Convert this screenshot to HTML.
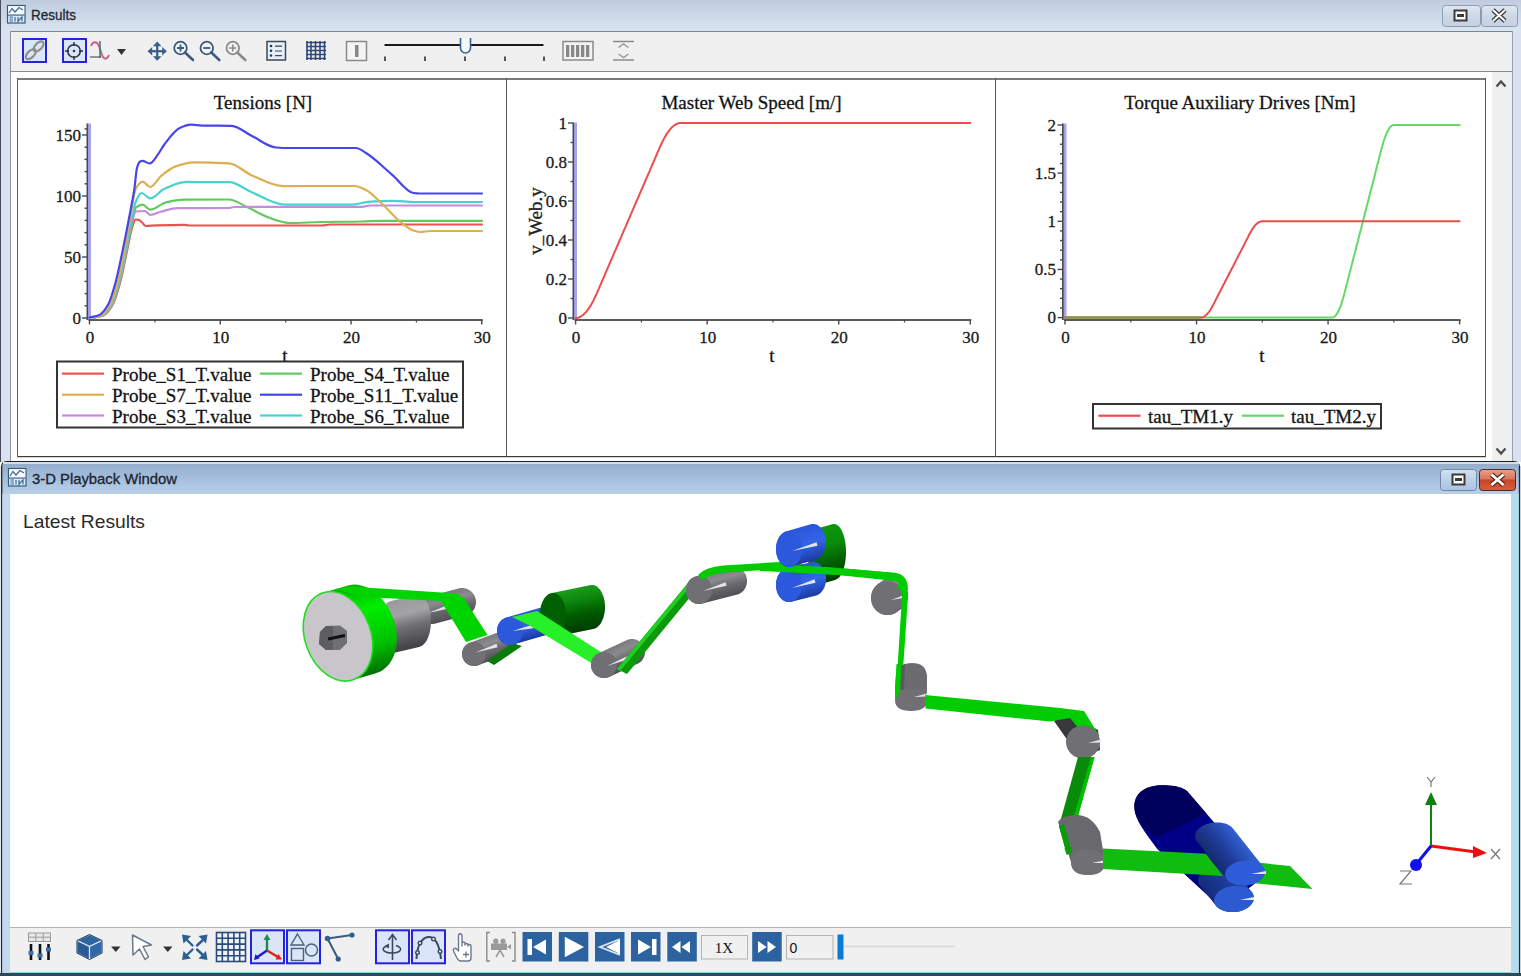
<!DOCTYPE html>
<html><head><meta charset="utf-8"><style>
html,body{margin:0;padding:0;width:1521px;height:976px;overflow:hidden;background:#fff}
svg{display:block}
text{font-family:"Liberation Serif",serif}
.ct{stroke:#1a1a1a;stroke-width:0.3px}
.sans{font-family:"Liberation Sans",sans-serif}
</style></head><body>
<svg width="1521" height="976" viewBox="0 0 1521 976">
<defs>
  <linearGradient id="gTitle1" x1="0" y1="0" x2="0" y2="1">
    <stop offset="0" stop-color="#bfccdd"/><stop offset="1" stop-color="#d8e4f0"/>
  </linearGradient>
  <linearGradient id="gTitle2" x1="0" y1="0" x2="0" y2="1">
    <stop offset="0" stop-color="#94aecc"/><stop offset="0.85" stop-color="#b2cbe9"/><stop offset="1" stop-color="#bccee2"/>
  </linearGradient>
  <linearGradient id="gBtn" x1="0" y1="0" x2="0" y2="1">
    <stop offset="0" stop-color="#dfe7f1"/><stop offset="0.5" stop-color="#cdd8e6"/><stop offset="1" stop-color="#c4d1e2"/>
  </linearGradient>
  <linearGradient id="gBtn2" x1="0" y1="0" x2="0" y2="1">
    <stop offset="0" stop-color="#d4e2f2"/><stop offset="0.5" stop-color="#bcd0e8"/><stop offset="1" stop-color="#a9c4e4"/>
  </linearGradient>
  <linearGradient id="gClose" x1="0" y1="0" x2="0" y2="1">
    <stop offset="0" stop-color="#e8a08a"/><stop offset="0.45" stop-color="#d9775a"/><stop offset="0.5" stop-color="#c8452a"/><stop offset="1" stop-color="#d2603e"/>
  </linearGradient>
</defs>

<!-- ============ RESULTS WINDOW ============ -->
<rect x="0" y="0" width="1521" height="462" fill="#dae2ef"/>
<rect x="0" y="0" width="1521" height="31" fill="url(#gTitle1)"/>
<rect x="0" y="0" width="1" height="462" fill="#464c58"/>
<!-- title icon -->
<g transform="translate(7,5)">
  <rect x="0.5" y="0.5" width="17.5" height="17.5" fill="#dcecf8" stroke="#3a5a7a" stroke-width="1.2"/>
  <rect x="1.2" y="1.2" width="16" height="8" fill="#f4faff"/>
  <polyline points="2,8 5,3.5 8,7 12,2.5 16,5" fill="none" stroke="#4a6a8a" stroke-width="1.3"/>
  <rect x="1" y="9.5" width="16.5" height="1.2" fill="#4a6a8a"/>
  <path d="M2.5,12 H6 M2.5,14 H6 M2.5,16 H6 M8,12 V16.5 M11,12 V16.5 L13,14 L15,12 V16.5" fill="none" stroke="#3a6a9a" stroke-width="1.2"/>
</g>
<text x="31" y="19.5" class="sans" font-size="14" fill="#1e2a36" stroke="#1e2a36" stroke-width="0.3" style="font-family:'Liberation Sans'" textLength="45" lengthAdjust="spacingAndGlyphs">Results</text>
<!-- title buttons -->
<rect x="1442.5" y="5.5" width="38" height="21" rx="3" fill="url(#gBtn)" stroke="#8d9db1"/>
<rect x="1481.5" y="5.5" width="36" height="21" rx="3" fill="url(#gBtn)" stroke="#8d9db1"/>
<rect x="1454.5" y="10.5" width="12" height="10" fill="#fff" stroke="#3a3a3a" stroke-width="2"/>
<rect x="1457" y="14" width="7" height="3" fill="#3a3a3a"/>
<path d="M1493,10 L1505,21 M1505,10 L1493,21" stroke="#3a3a3a" stroke-width="4.5"/>
<path d="M1493,10 L1505,21 M1505,10 L1493,21" stroke="#fff" stroke-width="2"/>

<!-- toolbar -->
<rect x="10" y="31" width="1503" height="41" fill="#f0f0f0"/>
<rect x="10" y="31" width="1503" height="1" fill="#7b858f"/>
<rect x="10" y="71" width="1503" height="1" fill="#8c8c8c"/>
<rect x="10" y="31" width="1" height="431" fill="#8a929e"/>

<!-- plot area -->
<rect x="11" y="72" width="1481" height="390" fill="#fff"/>
<rect x="1492" y="72" width="20" height="390" fill="#f0f0f0"/>
<rect x="1512" y="31" width="1" height="431" fill="#9aa0aa"/>
<path d="M1496.5,86.5 L1501,81.5 L1505.5,86.5" fill="none" stroke="#505050" stroke-width="2.4"/>
<path d="M1496.5,448.5 L1501,453.5 L1505.5,448.5" fill="none" stroke="#505050" stroke-width="2.4"/>

<!-- plot cell borders -->
<rect x="17" y="78" width="1469" height="2" fill="#7a7a7a"/>
<rect x="17" y="456" width="1469" height="1.2" fill="#3a3a3a"/>
<rect x="17" y="78" width="1" height="379" fill="#666"/>
<rect x="506" y="78" width="1" height="379" fill="#555"/>
<rect x="995" y="78" width="1" height="379" fill="#555"/>
<rect x="1485" y="78" width="1" height="379" fill="#555"/>

<!--TOOLBAR_ICONS-->
<!-- link toggle -->
<rect x="23" y="39" width="23" height="23" fill="#dae6f7" stroke="#2424e0" stroke-width="2"/>
<g fill="none" stroke="#8a9088" stroke-width="2.2">
  <ellipse cx="30.8" cy="54.2" rx="6.2" ry="3.3" transform="rotate(-45 30.8 54.2)"/>
  <ellipse cx="38.6" cy="46.4" rx="6.2" ry="3.3" transform="rotate(-45 38.6 46.4)"/>
</g>
<!-- target toggle -->
<rect x="63" y="39" width="23" height="23" fill="#dae6f7" stroke="#2424e0" stroke-width="2"/>
<circle cx="74" cy="51" r="6.3" fill="none" stroke="#2a3440" stroke-width="1.6"/>
<circle cx="74" cy="51" r="1.3" fill="#2a3440"/>
<path d="M74,42 V46 M74,56 V60 M65,51 H69 M79,51 H83" stroke="#2a3440" stroke-width="1.5"/>
<!-- curve icon -->
<path d="M91,46 C93,41 97,41 99,46 L102,55 C104,60 107,60 109,55" fill="none" stroke="#d06080" stroke-width="2"/>
<path d="M100,41 V58" stroke="#3a7a80" stroke-width="1.5"/>
<path d="M90,57 H101" stroke="#4a5a60" stroke-width="1.2"/>
<path d="M117,49 L126,49 L121.5,55 Z" fill="#333"/>
<!-- move -->
<g fill="#3b5f8c">
  <rect x="156.1" y="45" width="2.2" height="12"/>
  <rect x="151" y="50.1" width="12" height="2.2"/>
  <path d="M157.2,41.5 L161.5,46.2 L152.9,46.2 Z"/>
  <path d="M157.2,60.8 L161.5,56.2 L152.9,56.2 Z"/>
  <path d="M147.5,51.2 L152.2,46.9 L152.2,55.5 Z"/>
  <path d="M166.9,51.2 L162.2,46.9 L162.2,55.5 Z"/>
</g>
<!-- zoom in -->
<g fill="none" stroke="#3f5a78">
  <circle cx="180.5" cy="48" r="6.3" stroke-width="1.8" fill="#eef4fb"/>
  <path d="M185,52.5 L193,60" stroke-width="2.6" stroke-linecap="round"/>
  <path d="M177,48 H184 M180.5,44.5 V51.5" stroke-width="1.8"/>
</g>
<!-- zoom out -->
<g fill="none" stroke="#3f5a78">
  <circle cx="206.8" cy="48" r="6.3" stroke-width="1.8" fill="#eef4fb"/>
  <path d="M211.3,52.5 L219.3,60" stroke-width="2.6" stroke-linecap="round"/>
  <path d="M203.3,48 H210.3" stroke-width="1.8"/>
</g>
<!-- zoom gray -->
<g fill="none" stroke="#8a8a8a">
  <circle cx="232.8" cy="48" r="6.3" stroke-width="1.8"/>
  <path d="M237.3,52.5 L245.3,60" stroke-width="2.6" stroke-linecap="round"/>
  <path d="M229.3,48 H236.3 M232.8,44.5 V51.5" stroke-width="1.6"/>
</g>
<!-- list -->
<rect x="267" y="41.5" width="18.5" height="18.5" fill="#e6f0fa" stroke="#3a4858" stroke-width="1.5"/>
<g fill="#2a3848"><circle cx="271" cy="46" r="1.3"/><circle cx="271" cy="50.8" r="1.3"/><circle cx="271" cy="55.5" r="1.3"/></g>
<path d="M275,46.2 H282 M275,51 H282 M275,55.7 H282" stroke="#3a4858" stroke-width="1.2"/>
<!-- grid -->
<g stroke="#2e4a7a" stroke-width="1.6">
  <path d="M307,41 V60 M311,41 V60 M315.5,41 V60 M320,41 V60 M324.5,41 V60"/>
  <path d="M306,42.5 H326 M306,46.5 H326 M306,50.5 H326 M306,54.5 H326 M306,58.5 H326"/>
</g>
<!-- I box -->
<rect x="346.5" y="41.5" width="20" height="19" fill="#f4f4f4" stroke="#8a8a8a" stroke-width="1.5"/>
<rect x="355" y="45" width="3.5" height="12" fill="#888"/>
<!-- slider -->
<rect x="384.5" y="44" width="159" height="2" fill="#1a1a1a"/>
<g stroke="#111" stroke-width="1.4">
  <path d="M385,56.5 V61 M425,56.5 V61 M465,56.5 V61 M505,56.5 V61 M544,56.5 V61"/>
</g>
<path d="M460.5,38 V48 A5,5 0 0 0 470.5,48 V38" fill="#f4f8fc" stroke="#3a6090" stroke-width="1.6"/>
<!-- film strip -->
<rect x="563" y="41.5" width="30" height="18.5" fill="#f4f4f4" stroke="#8a8a8a" stroke-width="1.5"/>
<g fill="#888"><rect x="566" y="45" width="3.3" height="12"/><rect x="571" y="45" width="3.3" height="12"/><rect x="576" y="45" width="3.3" height="12"/><rect x="581" y="45" width="3.3" height="12"/><rect x="586" y="45" width="3.3" height="12"/></g>
<!-- collapse -->
<path d="M613,41.5 H634 M613,60 H634" stroke="#8a8a8a" stroke-width="1.5"/>
<path d="M618.5,47.5 L623.5,44 L628.5,47.5 M618.5,54 L623.5,57.5 L628.5,54" fill="none" stroke="#9a9a9a" stroke-width="1.5"/>

<!--/TOOLBAR_ICONS-->

<!--CHARTS-->
<text class="ct" x="285" y="362" font-size="19" text-anchor="middle" fill="#111">t</text>
<text class="ct" x="263" y="108.5" font-size="19" text-anchor="middle" fill="#111">Tensions [N]</text>
<rect x="87.5" y="123.5" width="3.5" height="196.5" fill="#a4a4ee"/>
<rect x="86.5" y="123.5" width="1.6" height="196.5" fill="#4a4a4a"/>
<rect x="82" y="317.3" width="5" height="1.4" fill="#4a4a4a"/>
<text class="ct" x="81" y="323.5" font-size="17" text-anchor="end" fill="#1a1a1a">0</text>
<rect x="82" y="256.3" width="5" height="1.4" fill="#4a4a4a"/>
<text class="ct" x="81" y="262.5" font-size="17" text-anchor="end" fill="#1a1a1a">50</text>
<rect x="82" y="195.3" width="5" height="1.4" fill="#4a4a4a"/>
<text class="ct" x="81" y="201.5" font-size="17" text-anchor="end" fill="#1a1a1a">100</text>
<rect x="82" y="134.3" width="5" height="1.4" fill="#4a4a4a"/>
<text class="ct" x="81" y="140.5" font-size="17" text-anchor="end" fill="#1a1a1a">150</text>
<rect x="84.5" y="305.1" width="2.5" height="1.4" fill="#4a4a4a"/>
<rect x="84.5" y="292.90000000000003" width="2.5" height="1.4" fill="#4a4a4a"/>
<rect x="84.5" y="280.7" width="2.5" height="1.4" fill="#4a4a4a"/>
<rect x="84.5" y="268.5" width="2.5" height="1.4" fill="#4a4a4a"/>
<rect x="84.5" y="244.10000000000002" width="2.5" height="1.4" fill="#4a4a4a"/>
<rect x="84.5" y="231.90000000000003" width="2.5" height="1.4" fill="#4a4a4a"/>
<rect x="84.5" y="219.70000000000002" width="2.5" height="1.4" fill="#4a4a4a"/>
<rect x="84.5" y="207.5" width="2.5" height="1.4" fill="#4a4a4a"/>
<rect x="84.5" y="183.10000000000002" width="2.5" height="1.4" fill="#4a4a4a"/>
<rect x="84.5" y="170.9" width="2.5" height="1.4" fill="#4a4a4a"/>
<rect x="84.5" y="158.70000000000002" width="2.5" height="1.4" fill="#4a4a4a"/>
<rect x="84.5" y="146.50000000000003" width="2.5" height="1.4" fill="#4a4a4a"/>
<rect x="84.5" y="128.20000000000002" width="2.5" height="1.4" fill="#4a4a4a"/>
<rect x="88.5" y="319" width="394.3" height="2" fill="#5a5a5a"/>
<rect x="88.8" y="320" width="1.4" height="4.5" fill="#4a4a4a"/>
<text class="ct" x="90.0" y="342.5" font-size="17" text-anchor="middle" fill="#1a1a1a">0</text>
<rect x="219.5666666666667" y="320" width="1.4" height="4.5" fill="#4a4a4a"/>
<text class="ct" x="220.76666666666668" y="342.5" font-size="17" text-anchor="middle" fill="#1a1a1a">10</text>
<rect x="350.33333333333337" y="320" width="1.4" height="4.5" fill="#4a4a4a"/>
<text class="ct" x="351.53333333333336" y="342.5" font-size="17" text-anchor="middle" fill="#1a1a1a">20</text>
<rect x="481.1" y="320" width="1.4" height="4.5" fill="#4a4a4a"/>
<text class="ct" x="482.3" y="342.5" font-size="17" text-anchor="middle" fill="#1a1a1a">30</text>
<rect x="154.28333333333333" y="320" width="1.2" height="2.5" fill="#4a4a4a"/>
<rect x="285.04999999999995" y="320" width="1.2" height="2.5" fill="#4a4a4a"/>
<rect x="415.81666666666666" y="320" width="1.2" height="2.5" fill="#4a4a4a"/>
<path d="M94.0,317.5 C97.2,316.8 100.3,316.6 103.5,315.5 C106.5,314.4 109.5,310.1 112.5,305.0 C115.0,300.8 117.5,292.0 120.0,283.0 C122.3,274.6 124.7,261.7 127.0,251.0 C128.7,243.4 130.3,233.2 132.0,228.0 C133.2,224.4 134.3,219.5 135.5,219.5 C136.5,219.5 137.5,219.6 138.5,219.8 C139.5,220.0 140.5,221.2 141.5,222.0 C143.0,223.2 144.5,226.0 146.0,226.0 C149.7,226.0 153.3,225.4 157.0,225.3 C166.0,225.0 175.0,224.8 184.0,224.8 C185.7,224.8 187.3,225.5 189.0,225.5 C233.3,225.5 277.7,225.5 322.0,225.5 C324.7,225.5 327.3,224.5 330.0,224.5 C380.7,224.5 431.3,224.5 482.0,224.5" fill="none" stroke="#ee5050" stroke-width="2.2" stroke-linejoin="round" stroke-linecap="round" opacity="1.0"/>
<path d="M93.5,317.5 C96.7,316.8 99.8,316.6 103.0,315.5 C106.0,314.4 109.0,310.1 112.0,305.0 C114.5,300.8 117.0,292.0 119.5,283.0 C121.8,274.6 124.2,262.1 126.5,251.0 C128.3,242.3 130.2,232.2 132.0,224.0 C133.3,218.0 134.7,208.6 136.0,207.5 C138.2,205.7 140.3,204.7 142.5,204.7 C145.1,204.7 147.8,209.7 150.4,209.7 C155.6,209.7 160.8,203.6 166.0,202.4 C172.0,201.0 178.0,199.8 184.0,199.7 C199.0,199.6 214.0,199.5 229.0,199.5 C235.0,199.5 241.0,204.3 247.0,207.0 C253.0,209.7 259.0,213.6 265.0,216.0 C271.0,218.4 277.0,220.9 283.0,222.0 C285.3,222.4 287.7,223.0 290.0,223.0 C300.0,223.0 310.0,222.2 320.0,222.0 C334.0,221.7 348.0,221.8 362.0,221.5 C368.0,221.4 374.0,220.8 380.0,220.8 C414.0,220.8 448.0,220.8 482.0,220.8" fill="none" stroke="#62c862" stroke-width="2.2" stroke-linejoin="round" stroke-linecap="round" opacity="1.0"/>
<path d="M93.0,317.5 C96.2,316.8 99.3,316.6 102.5,315.5 C105.5,314.4 108.5,310.1 111.5,305.0 C114.0,300.8 116.5,292.0 119.0,283.0 C121.3,274.6 123.7,262.5 126.0,251.0 C127.8,242.0 129.7,227.9 131.5,222.0 C133.0,217.2 134.5,211.7 136.0,211.5 C138.9,211.1 141.9,211.0 144.8,211.0 C146.7,211.0 148.5,214.8 150.4,214.8 C154.2,214.8 157.9,212.4 161.7,211.5 C166.9,210.2 172.2,208.2 177.4,208.2 C194.6,208.0 211.8,208.2 229.0,208.0 C230.7,208.0 232.3,207.0 234.0,207.0 C276.7,206.8 319.3,207.0 362.0,206.8 C364.7,206.8 367.3,205.5 370.0,205.5 C407.3,205.5 444.7,205.5 482.0,205.5" fill="none" stroke="#c88ae0" stroke-width="2.2" stroke-linejoin="round" stroke-linecap="round" opacity="1.0"/>
<path d="M92.5,317.5 C95.7,316.8 98.8,316.6 102.0,315.5 C105.0,314.4 108.0,310.1 111.0,305.0 C113.5,300.8 116.0,292.0 118.5,283.0 C120.8,274.6 123.2,262.8 125.5,251.0 C127.3,241.7 129.2,228.1 131.0,220.0 C132.8,212.0 134.6,203.9 136.4,200.2 C138.1,196.8 139.7,193.0 141.4,193.0 C144.4,193.0 147.4,198.4 150.4,198.4 C154.9,198.4 159.5,191.0 164.0,189.0 C171.5,185.6 179.0,181.9 186.5,181.9 C192.5,181.9 198.5,182.2 204.5,182.2 C212.8,182.2 221.0,182.2 229.3,182.2 C236.8,182.2 244.4,189.2 251.9,192.3 C262.4,196.7 272.9,204.0 283.4,204.5 C285.6,204.6 287.8,204.7 290.0,204.7 C310.7,204.7 331.3,204.7 352.0,204.7 C357.3,204.7 362.7,202.1 368.0,201.8 C376.3,201.3 384.7,200.9 393.0,200.9 C400.0,200.9 407.0,202.0 414.0,202.0 C436.7,202.0 459.3,202.0 482.0,202.0" fill="none" stroke="#48d2d2" stroke-width="2.2" stroke-linejoin="round" stroke-linecap="round" opacity="1.0"/>
<path d="M91.5,317.5 C94.7,316.8 97.8,316.6 101.0,315.5 C104.0,314.4 107.0,310.1 110.0,305.0 C112.5,300.8 115.0,292.0 117.5,283.0 C119.8,274.6 122.2,263.2 124.5,251.0 C126.3,241.4 128.2,228.1 130.0,218.0 C131.9,207.5 133.8,192.4 135.7,189.0 C138.0,184.9 140.2,181.7 142.5,181.7 C145.1,181.7 147.8,187.0 150.4,187.0 C154.2,187.0 157.9,178.4 161.7,175.4 C166.2,171.8 170.7,168.2 175.2,166.6 C181.2,164.5 187.2,162.3 193.2,162.3 C205.2,162.3 217.3,162.7 229.3,163.4 C236.8,163.9 244.4,172.2 251.9,175.4 C262.4,179.8 272.9,186.2 283.4,186.2 C288.9,186.2 294.5,186.0 300.0,186.0 C318.2,186.0 336.4,186.0 354.6,186.0 C358.4,186.0 362.2,188.2 366.0,190.0 C371.7,192.8 377.3,199.5 383.0,204.7 C389.3,210.5 395.7,218.5 402.0,223.3 C405.8,226.2 409.6,229.4 413.4,230.5 C415.8,231.2 418.2,232.0 420.6,232.0 C423.7,232.0 426.9,231.0 430.0,231.0 C447.3,231.0 464.7,231.0 482.0,231.0" fill="none" stroke="#dcb050" stroke-width="2.2" stroke-linejoin="round" stroke-linecap="round" opacity="1.0"/>
<path d="M89.5,317.5 C92.8,316.7 96.0,316.4 99.3,315.0 C102.3,313.7 105.3,309.5 108.3,304.3 C110.7,300.1 113.1,291.3 115.5,282.7 C117.9,274.1 120.3,261.9 122.7,250.4 C124.8,240.4 126.9,229.3 129.0,218.2 C130.8,208.9 132.5,201.1 134.3,189.5 C135.2,183.6 136.1,171.2 137.0,168.0 C137.9,164.8 138.8,162.2 139.7,161.7 C140.6,161.2 141.5,160.8 142.4,160.8 C144.8,160.8 147.2,163.5 149.6,163.5 C152.6,163.5 155.5,157.5 158.5,153.6 C160.3,151.2 162.2,147.4 164.0,145.0 C169.2,138.1 174.5,130.3 179.7,128.0 C183.5,126.3 187.2,124.7 191.0,124.7 C194.7,124.7 198.3,125.5 202.0,125.6 C211.9,125.7 221.7,125.7 231.6,125.8 C238.4,125.9 245.1,132.7 251.9,136.0 C259.9,139.9 268.0,147.0 276.0,147.5 C280.7,147.8 285.3,148.0 290.0,148.0 C312.0,148.0 334.0,148.0 356.0,148.0 C359.3,148.0 362.7,151.0 366.0,153.0 C374.7,158.2 383.3,167.3 392.0,174.6 C399.1,180.6 406.3,192.1 413.4,193.0 C415.6,193.3 417.8,193.5 420.0,193.5 C440.7,193.5 461.3,193.5 482.0,193.5" fill="none" stroke="#4646ea" stroke-width="2.2" stroke-linejoin="round" stroke-linecap="round" opacity="1.0"/>
<rect x="57" y="361.5" width="406" height="66" fill="#fff" stroke="#333" stroke-width="2"/>
<rect x="62" y="372.5" width="42" height="2.2" fill="#ee5050"/>
<text class="ct" x="112" y="380.6" font-size="19" fill="#111">Probe_S1_T.value</text>
<rect x="62" y="393.59999999999997" width="42" height="2.2" fill="#dcb050"/>
<text class="ct" x="112" y="401.7" font-size="19" fill="#111">Probe_S7_T.value</text>
<rect x="62" y="414.4" width="42" height="2.2" fill="#c88ae0"/>
<text class="ct" x="112" y="422.5" font-size="19" fill="#111">Probe_S3_T.value</text>
<rect x="260" y="372.5" width="42" height="2.2" fill="#62c862"/>
<text class="ct" x="310" y="380.6" font-size="19" fill="#111">Probe_S4_T.value</text>
<rect x="260" y="393.59999999999997" width="42" height="2.2" fill="#4646ea"/>
<text class="ct" x="310" y="401.7" font-size="19" fill="#111">Probe_S11_T.value</text>
<rect x="260" y="414.4" width="42" height="2.2" fill="#48d2d2"/>
<text class="ct" x="310" y="422.5" font-size="19" fill="#111">Probe_S6_T.value</text>
<text class="ct" x="751.5" y="108.5" font-size="19" text-anchor="middle" fill="#111">Master Web Speed [m/]</text>
<rect x="573.5" y="122.5" width="3.5" height="197.5" fill="#a4a4ee"/>
<rect x="572.5" y="122.5" width="1.6" height="197.5" fill="#4a4a4a"/>
<rect x="568" y="317.3" width="5" height="1.4" fill="#4a4a4a"/>
<text class="ct" x="567" y="323.5" font-size="17" text-anchor="end" fill="#1a1a1a">0</text>
<rect x="568" y="278.3" width="5" height="1.4" fill="#4a4a4a"/>
<text class="ct" x="567" y="284.5" font-size="17" text-anchor="end" fill="#1a1a1a">0.2</text>
<rect x="568" y="239.3" width="5" height="1.4" fill="#4a4a4a"/>
<text class="ct" x="567" y="245.5" font-size="17" text-anchor="end" fill="#1a1a1a">0.4</text>
<rect x="568" y="200.3" width="5" height="1.4" fill="#4a4a4a"/>
<text class="ct" x="567" y="206.5" font-size="17" text-anchor="end" fill="#1a1a1a">0.6</text>
<rect x="568" y="161.3" width="5" height="1.4" fill="#4a4a4a"/>
<text class="ct" x="567" y="167.5" font-size="17" text-anchor="end" fill="#1a1a1a">0.8</text>
<rect x="568" y="122.3" width="5" height="1.4" fill="#4a4a4a"/>
<text class="ct" x="567" y="128.5" font-size="17" text-anchor="end" fill="#1a1a1a">1</text>
<rect x="570.5" y="297.8" width="2.5" height="1.4" fill="#4a4a4a"/>
<rect x="570.5" y="258.8" width="2.5" height="1.4" fill="#4a4a4a"/>
<rect x="570.5" y="219.8" width="2.5" height="1.4" fill="#4a4a4a"/>
<rect x="570.5" y="180.8" width="2.5" height="1.4" fill="#4a4a4a"/>
<rect x="570.5" y="141.8" width="2.5" height="1.4" fill="#4a4a4a"/>
<rect x="574.6" y="319" width="396.69999999999993" height="2" fill="#5a5a5a"/>
<rect x="574.9" y="320" width="1.4" height="4.5" fill="#4a4a4a"/>
<text class="ct" x="576.1" y="342.5" font-size="17" text-anchor="middle" fill="#1a1a1a">0</text>
<rect x="706.4666666666666" y="320" width="1.4" height="4.5" fill="#4a4a4a"/>
<text class="ct" x="707.6666666666666" y="342.5" font-size="17" text-anchor="middle" fill="#1a1a1a">10</text>
<rect x="838.0333333333333" y="320" width="1.4" height="4.5" fill="#4a4a4a"/>
<text class="ct" x="839.2333333333333" y="342.5" font-size="17" text-anchor="middle" fill="#1a1a1a">20</text>
<rect x="969.5999999999999" y="320" width="1.4" height="4.5" fill="#4a4a4a"/>
<text class="ct" x="970.8" y="342.5" font-size="17" text-anchor="middle" fill="#1a1a1a">30</text>
<rect x="640.7833333333333" y="320" width="1.2" height="2.5" fill="#4a4a4a"/>
<rect x="772.35" y="320" width="1.2" height="2.5" fill="#4a4a4a"/>
<rect x="903.9166666666666" y="320" width="1.2" height="2.5" fill="#4a4a4a"/>
<text class="ct" x="772" y="362" font-size="19" text-anchor="middle" fill="#111">t</text>
<text class="ct" transform="translate(541.5,221) rotate(-90)" font-size="19" text-anchor="middle" fill="#222">v_Web.y</text>
<path d="M575.6,318.0 L576.7,317.9 L577.7,317.8 L578.8,317.5 L579.8,317.0 L580.9,316.5 L581.9,315.8 L583.0,315.0 L584.0,314.1 L585.1,313.1 L586.1,311.9 L587.2,310.6 L588.2,309.2 L589.3,307.7 L590.3,306.1 L591.4,304.3 L592.4,302.4 L593.5,300.4 L594.5,298.3 L595.6,296.0 L596.7,293.6 L597.7,291.2 L598.8,288.8 L599.8,286.3 L600.9,283.9 L601.9,281.4 L603.0,279.0 L604.0,276.6 L605.1,274.1 L606.1,271.7 L607.2,269.2 L608.2,266.8 L609.3,264.4 L610.3,261.9 L611.4,259.5 L612.4,257.1 L613.5,254.6 L614.5,252.2 L615.6,249.8 L616.6,247.3 L617.7,244.9 L618.8,242.4 L619.8,240.0 L620.9,237.6 L621.9,235.1 L623.0,232.7 L624.0,230.2 L625.1,227.8 L626.1,225.4 L627.2,222.9 L628.2,220.5 L629.3,218.1 L630.3,215.6 L631.4,213.2 L632.4,210.8 L633.5,208.3 L634.5,205.9 L635.6,203.4 L636.6,201.0 L637.7,198.6 L638.8,196.1 L639.8,193.7 L640.9,191.2 L641.9,188.8 L643.0,186.4 L644.0,183.9 L645.1,181.5 L646.1,179.1 L647.2,176.6 L648.2,174.2 L649.3,171.8 L650.3,169.3 L651.4,166.9 L652.4,164.4 L653.5,162.0 L654.5,159.6 L655.6,157.1 L656.6,154.7 L657.7,152.2 L658.8,149.8 L659.8,147.4 L660.9,145.0 L661.9,142.7 L663.0,140.6 L664.0,138.6 L665.1,136.7 L666.1,134.9 L667.2,133.3 L668.2,131.8 L669.3,130.4 L670.3,129.1 L671.4,127.9 L672.4,126.9 L673.5,126.0 L674.5,125.2 L675.6,124.5 L676.6,124.0 L677.7,123.5 L678.7,123.2 L679.8,123.1 L680.9,123.0 L970.3,123.0" fill="none" stroke="#ee4c4c" stroke-width="2.0" stroke-linejoin="round" stroke-linecap="round" opacity="1.0"/>
<text class="ct" x="1240" y="108.5" font-size="19" text-anchor="middle" fill="#111">Torque Auxiliary Drives [Nm]</text>
<rect x="1063.0" y="123.5" width="3.5" height="196.5" fill="#a4a4ee"/>
<rect x="1062.0" y="123.5" width="1.6" height="196.5" fill="#4a4a4a"/>
<rect x="1057.5" y="316.90000000000003" width="5" height="1.4" fill="#4a4a4a"/>
<text class="ct" x="1056" y="323.1" font-size="17" text-anchor="end" fill="#1a1a1a">0</text>
<rect x="1057.5" y="268.75000000000006" width="5" height="1.4" fill="#4a4a4a"/>
<text class="ct" x="1056" y="274.95000000000005" font-size="17" text-anchor="end" fill="#1a1a1a">0.5</text>
<rect x="1057.5" y="220.60000000000002" width="5" height="1.4" fill="#4a4a4a"/>
<text class="ct" x="1056" y="226.8" font-size="17" text-anchor="end" fill="#1a1a1a">1</text>
<rect x="1057.5" y="172.45000000000005" width="5" height="1.4" fill="#4a4a4a"/>
<text class="ct" x="1056" y="178.65000000000003" font-size="17" text-anchor="end" fill="#1a1a1a">1.5</text>
<rect x="1057.5" y="124.30000000000003" width="5" height="1.4" fill="#4a4a4a"/>
<text class="ct" x="1056" y="130.50000000000003" font-size="17" text-anchor="end" fill="#1a1a1a">2</text>
<rect x="1060.0" y="307.27000000000004" width="2.5" height="1.4" fill="#4a4a4a"/>
<rect x="1060.0" y="297.64000000000004" width="2.5" height="1.4" fill="#4a4a4a"/>
<rect x="1060.0" y="288.01000000000005" width="2.5" height="1.4" fill="#4a4a4a"/>
<rect x="1060.0" y="278.38000000000005" width="2.5" height="1.4" fill="#4a4a4a"/>
<rect x="1060.0" y="259.12000000000006" width="2.5" height="1.4" fill="#4a4a4a"/>
<rect x="1060.0" y="249.49000000000004" width="2.5" height="1.4" fill="#4a4a4a"/>
<rect x="1060.0" y="239.86" width="2.5" height="1.4" fill="#4a4a4a"/>
<rect x="1060.0" y="230.23000000000002" width="2.5" height="1.4" fill="#4a4a4a"/>
<rect x="1060.0" y="210.97000000000003" width="2.5" height="1.4" fill="#4a4a4a"/>
<rect x="1060.0" y="201.34000000000003" width="2.5" height="1.4" fill="#4a4a4a"/>
<rect x="1060.0" y="191.71000000000004" width="2.5" height="1.4" fill="#4a4a4a"/>
<rect x="1060.0" y="182.08000000000004" width="2.5" height="1.4" fill="#4a4a4a"/>
<rect x="1060.0" y="162.82000000000002" width="2.5" height="1.4" fill="#4a4a4a"/>
<rect x="1060.0" y="153.19000000000005" width="2.5" height="1.4" fill="#4a4a4a"/>
<rect x="1060.0" y="143.56000000000003" width="2.5" height="1.4" fill="#4a4a4a"/>
<rect x="1060.0" y="133.93000000000004" width="2.5" height="1.4" fill="#4a4a4a"/>
<rect x="1064.0" y="319" width="396.5999999999999" height="2" fill="#5a5a5a"/>
<rect x="1064.3" y="320" width="1.4" height="4.5" fill="#4a4a4a"/>
<text class="ct" x="1065.5" y="342.5" font-size="17" text-anchor="middle" fill="#1a1a1a">0</text>
<rect x="1195.8333333333333" y="320" width="1.4" height="4.5" fill="#4a4a4a"/>
<text class="ct" x="1197.0333333333333" y="342.5" font-size="17" text-anchor="middle" fill="#1a1a1a">10</text>
<rect x="1327.3666666666666" y="320" width="1.4" height="4.5" fill="#4a4a4a"/>
<text class="ct" x="1328.5666666666666" y="342.5" font-size="17" text-anchor="middle" fill="#1a1a1a">20</text>
<rect x="1458.8999999999999" y="320" width="1.4" height="4.5" fill="#4a4a4a"/>
<text class="ct" x="1460.1" y="342.5" font-size="17" text-anchor="middle" fill="#1a1a1a">30</text>
<rect x="1130.1666666666667" y="320" width="1.2" height="2.5" fill="#4a4a4a"/>
<rect x="1261.7" y="320" width="1.2" height="2.5" fill="#4a4a4a"/>
<rect x="1393.2333333333333" y="320" width="1.2" height="2.5" fill="#4a4a4a"/>
<text class="ct" x="1262" y="362" font-size="19" text-anchor="middle" fill="#111">t</text>
<path d="M1065.0,317.6 L1332.0,317.6 L1333.0,317.4 L1334.1,316.9 L1335.1,316.1 L1336.1,314.9 L1337.2,313.4 L1338.2,311.6 L1339.2,309.4 L1340.3,306.9 L1341.3,304.1 L1342.3,300.9 L1343.3,297.4 L1344.4,293.5 L1345.4,289.5 L1346.4,285.5 L1347.5,281.5 L1348.5,277.5 L1349.5,273.5 L1350.6,269.4 L1351.6,265.4 L1352.6,261.4 L1353.6,257.4 L1354.7,253.4 L1355.7,249.4 L1356.7,245.4 L1357.8,241.4 L1358.8,237.4 L1359.8,233.3 L1360.9,229.3 L1361.9,225.3 L1362.9,221.3 L1364.0,217.3 L1365.0,213.3 L1366.0,209.3 L1367.0,205.2 L1368.1,201.2 L1369.1,197.2 L1370.1,193.2 L1371.2,189.2 L1372.2,185.2 L1373.2,181.2 L1374.3,177.2 L1375.3,173.2 L1376.3,169.1 L1377.3,165.1 L1378.4,161.1 L1379.4,157.1 L1380.4,153.1 L1381.5,149.1 L1382.5,145.2 L1383.5,141.7 L1384.6,138.5 L1385.6,135.7 L1386.6,133.2 L1387.7,131.0 L1388.7,129.2 L1389.7,127.7 L1390.7,126.5 L1391.8,125.7 L1392.8,125.2 L1393.8,125.0 L1459.6,125.0" fill="none" stroke="#66d866" stroke-width="2.0" stroke-linejoin="round" stroke-linecap="round" opacity="1.0"/>
<path d="M1065.0,317.6 L1200.5,317.6 L1201.5,317.5 L1202.5,317.3 L1203.6,316.8 L1204.6,316.3 L1205.6,315.5 L1206.7,314.6 L1207.7,313.5 L1208.7,312.2 L1209.8,310.8 L1210.8,309.2 L1211.8,307.5 L1212.8,305.6 L1213.9,303.6 L1214.9,301.6 L1215.9,299.5 L1217.0,297.5 L1218.0,295.5 L1219.0,293.5 L1220.1,291.5 L1221.1,289.5 L1222.1,287.5 L1223.1,285.5 L1224.2,283.5 L1225.2,281.5 L1226.2,279.5 L1227.3,277.5 L1228.3,275.5 L1229.3,273.5 L1230.4,271.5 L1231.4,269.5 L1232.4,267.4 L1233.5,265.4 L1234.5,263.4 L1235.5,261.4 L1236.5,259.4 L1237.6,257.4 L1238.6,255.4 L1239.6,253.4 L1240.7,251.4 L1241.7,249.4 L1242.7,247.4 L1243.8,245.4 L1244.8,243.4 L1245.8,241.4 L1246.8,239.4 L1247.9,237.4 L1248.9,235.3 L1249.9,233.3 L1251.0,231.4 L1252.0,229.7 L1253.0,228.1 L1254.1,226.7 L1255.1,225.4 L1256.1,224.3 L1257.1,223.4 L1258.2,222.6 L1259.2,222.1 L1260.2,221.6 L1261.3,221.4 L1262.3,221.3 L1459.6,221.3" fill="none" stroke="#ee4c4c" stroke-width="2.0" stroke-linejoin="round" stroke-linecap="round" opacity="1.0"/>
<rect x="1065.0" y="316.3" width="135.47933333333322" height="2.6" fill="#8c9a50"/>
<rect x="1093" y="404" width="288" height="24.5" fill="#fff" stroke="#333" stroke-width="2"/>
<rect x="1098.4" y="414.6" width="42" height="2.2" fill="#ee4c4c"/>
<text class="ct" x="1148" y="423" font-size="19" fill="#111">tau_TM1.y</text>
<rect x="1242" y="414.6" width="42" height="2.2" fill="#66d866"/>
<text class="ct" x="1291" y="423" font-size="19" fill="#111">tau_TM2.y</text>
<!--/CHARTS-->

<!-- ============ 3D WINDOW ============ -->
<path d="M1.6,976 L1.6,467 Q1.6,461.5 7,461.5 L1514,461.5 Q1519.4,461.5 1519.4,467 L1519.4,976 Z" fill="#c3d6ea" stroke="#222" stroke-width="1.2"/>
<rect x="3" y="462" width="1516" height="2" fill="#d8dee4"/>
<rect x="3" y="464" width="1516" height="30" fill="url(#gTitle2)"/>
<g transform="translate(8,468)">
  <rect x="0.5" y="0.5" width="17.5" height="17.5" fill="#dcecf8" stroke="#3a5a7a" stroke-width="1.2"/>
  <rect x="1.2" y="1.2" width="16" height="8" fill="#f4faff"/>
  <polyline points="2,8 5,3.5 8,7 12,2.5 16,5" fill="none" stroke="#4a6a8a" stroke-width="1.3"/>
  <rect x="1" y="9.5" width="16.5" height="1.2" fill="#4a6a8a"/>
  <path d="M2.5,12 H6 M2.5,14 H6 M2.5,16 H6 M8,12 V16.5 M11,12 V16.5 L13,14 L15,12 V16.5" fill="none" stroke="#3a6a9a" stroke-width="1.2"/>
</g>
<text x="32" y="483.5" font-size="14.5" fill="#1a2430" stroke="#1a2430" stroke-width="0.3" style="font-family:'Liberation Sans'" textLength="145" lengthAdjust="spacingAndGlyphs">3-D Playback Window</text>
<rect x="1440.5" y="469.5" width="36" height="21" rx="3" fill="url(#gBtn2)" stroke="#6f88a8"/>
<rect x="1479.5" y="469.5" width="36" height="21" rx="3" fill="url(#gClose)" stroke="#4a2a28"/>
<rect x="1452.5" y="474.5" width="12" height="10" fill="#fff" stroke="#3a3a3a" stroke-width="2"/>
<rect x="1455" y="478" width="7" height="3" fill="#3a3a3a"/>
<path d="M1491.5,474.5 L1503.5,485 M1503.5,474.5 L1491.5,485" stroke="#5a2a22" stroke-width="5"/>
<path d="M1491.5,474.5 L1503.5,485 M1503.5,474.5 L1491.5,485" stroke="#fff" stroke-width="2.6"/>

<rect x="10" y="494" width="1501" height="433" fill="#fff"/>
<text x="23" y="528" font-size="19" fill="#2a2a2a" style="font-family:'Liberation Sans'" textLength="122" lengthAdjust="spacingAndGlyphs">Latest Results</text>

<!--SCENE-->
<defs><linearGradient id="sg1" gradientUnits="userSpaceOnUse" x1="443.4" y1="592.5" x2="450.6" y2="619.5"><stop offset="0" stop-color="#7a7a7e"/><stop offset="0.3" stop-color="#8c8c90"/><stop offset="0.6" stop-color="#6a6a6e"/><stop offset="1" stop-color="#505054"/></linearGradient><linearGradient id="sg2" gradientUnits="userSpaceOnUse" x1="399.2" y1="598.7" x2="410.8" y2="649.3"><stop offset="0" stop-color="#9a9a9e"/><stop offset="0.3" stop-color="#a4a4a8"/><stop offset="0.55" stop-color="#707074"/><stop offset="1" stop-color="#404044"/></linearGradient><linearGradient id="sg3" gradientUnits="userSpaceOnUse" x1="337.1" y1="588.6" x2="362.9" y2="677.0"><stop offset="0" stop-color="#00b000"/><stop offset="0.3" stop-color="#00ee00"/><stop offset="0.7" stop-color="#00c000"/><stop offset="1" stop-color="#007000"/></linearGradient><linearGradient id="sg4" gradientUnits="userSpaceOnUse" x1="484.9" y1="637.2" x2="493.1" y2="659.8"><stop offset="0" stop-color="#7a7a7e"/><stop offset="0.3" stop-color="#8c8c90"/><stop offset="0.6" stop-color="#6a6a6e"/><stop offset="1" stop-color="#505054"/></linearGradient><linearGradient id="sg5" gradientUnits="userSpaceOnUse" x1="525.1" y1="612.1" x2="532.9" y2="638.9"><stop offset="0" stop-color="#2a56d8"/><stop offset="0.5" stop-color="#3464e8"/><stop offset="1" stop-color="#1a3aa0"/></linearGradient><linearGradient id="sg6" gradientUnits="userSpaceOnUse" x1="568.1" y1="589.4" x2="576.9" y2="632.6"><stop offset="0" stop-color="#1c9c1c"/><stop offset="0.25" stop-color="#0e8a0e"/><stop offset="0.6" stop-color="#005c00"/><stop offset="1" stop-color="#003c00"/></linearGradient><linearGradient id="sg7" gradientUnits="userSpaceOnUse" x1="612.5" y1="646.7" x2="623.5" y2="670.3"><stop offset="0" stop-color="#7a7a7e"/><stop offset="0.3" stop-color="#8c8c90"/><stop offset="0.6" stop-color="#6a6a6e"/><stop offset="1" stop-color="#505054"/></linearGradient><linearGradient id="sg8" gradientUnits="userSpaceOnUse" x1="713.0" y1="571.9" x2="720.0" y2="599.1"><stop offset="0" stop-color="#7a7a7e"/><stop offset="0.3" stop-color="#8c8c90"/><stop offset="0.6" stop-color="#6a6a6e"/><stop offset="1" stop-color="#505054"/></linearGradient><linearGradient id="sg9" gradientUnits="userSpaceOnUse" x1="879.3" y1="582.9" x2="899.7" y2="610.1"><stop offset="0" stop-color="#7a7a7e"/><stop offset="0.3" stop-color="#8c8c90"/><stop offset="0.6" stop-color="#6a6a6e"/><stop offset="1" stop-color="#505054"/></linearGradient><linearGradient id="sg10" gradientUnits="userSpaceOnUse" x1="819.3" y1="527.1" x2="834.7" y2="580.9"><stop offset="0" stop-color="#0a9a0a"/><stop offset="0.35" stop-color="#0a8a0a"/><stop offset="0.7" stop-color="#005a00"/><stop offset="1" stop-color="#003a00"/></linearGradient><linearGradient id="sg11" gradientUnits="userSpaceOnUse" x1="796.9" y1="565.5" x2="805.1" y2="598.5"><stop offset="0" stop-color="#2a56d8"/><stop offset="0.5" stop-color="#3464e8"/><stop offset="1" stop-color="#1a3aa0"/></linearGradient><linearGradient id="sg12" gradientUnits="userSpaceOnUse" x1="796.0" y1="528.2" x2="806.0" y2="562.8"><stop offset="0" stop-color="#2a56d8"/><stop offset="0.5" stop-color="#3464e8"/><stop offset="1" stop-color="#1a3aa0"/></linearGradient><linearGradient id="sg13" gradientUnits="userSpaceOnUse" x1="1210.4" y1="901.5" x2="1241.6" y2="876.5"><stop offset="0" stop-color="#142a78"/><stop offset="0.6" stop-color="#1c3a98"/><stop offset="1" stop-color="#2a50c0"/></linearGradient><linearGradient id="sg14" gradientUnits="userSpaceOnUse" x1="1214.3" y1="866.4" x2="1245.7" y2="841.6"><stop offset="0" stop-color="#16286a"/><stop offset="0.45" stop-color="#1e3c98"/><stop offset="1" stop-color="#3464d8"/></linearGradient></defs>
<path d="M418.0,610.0 L418.1,608.8 L418.2,607.6 L418.5,606.4 L418.8,605.2 L419.3,604.1 L419.9,603.0 L420.5,602.0 L421.3,601.0 L422.1,600.1 L423.0,599.3 L424.0,598.5 L425.0,597.9 L426.1,597.3 L427.2,596.8 L428.4,596.5 L458.4,588.5 L459.6,588.2 L460.8,588.0 L462.0,588.0 L463.2,588.0 L464.4,588.2 L465.6,588.5 L466.8,588.8 L467.9,589.3 L469.0,589.9 L470.0,590.5 L471.0,591.3 L471.9,592.1 L472.7,593.0 L473.5,594.0 L474.1,595.0 L474.7,596.1 L475.2,597.2 L475.5,598.4 L475.8,599.6 L475.9,600.8 L476.0,602.0 L475.9,603.2 L475.8,604.4 L475.5,605.6 L475.2,606.8 L474.7,607.9 L474.1,609.0 L473.5,610.0 L472.7,611.0 L471.9,611.9 L471.0,612.7 L470.0,613.5 L469.0,614.1 L467.9,614.7 L466.8,615.2 L465.6,615.5 L435.6,623.5 L434.4,623.8 L433.2,624.0 L432.0,624.0 L430.8,624.0 L429.6,623.8 L428.4,623.5 L427.2,623.2 L426.1,622.7 L425.0,622.1 L424.0,621.5 L423.0,620.7 L422.1,619.9 L421.3,619.0 L420.5,618.0 L419.9,617.0 L419.3,615.9 L418.8,614.8 L418.5,613.6 L418.2,612.4 L418.1,611.2 Z" fill="url(#sg1)"/>
<path d="M428.0,613.0 L446.4,608.9 L445.6,606.1 Z" fill="#e4e4ea"/>
<path d="M379.0,627.0 L379.1,624.7 L379.2,622.5 L379.4,620.3 L379.8,618.1 L380.2,616.0 L380.7,614.0 L381.4,612.1 L382.0,610.3 L382.8,608.6 L383.6,607.1 L384.5,605.7 L385.5,604.5 L386.5,603.4 L387.6,602.6 L388.6,601.9 L389.7,601.4 L390.9,601.1 L416.9,595.1 L418.0,595.0 L419.1,595.1 L420.3,595.4 L421.4,595.9 L422.4,596.6 L423.5,597.4 L424.5,598.5 L425.5,599.7 L426.4,601.1 L427.2,602.6 L428.0,604.3 L428.6,606.1 L429.3,608.0 L429.8,610.0 L430.2,612.1 L430.6,614.3 L430.8,616.5 L430.9,618.7 L431.0,621.0 L430.9,623.3 L430.8,625.5 L430.6,627.7 L430.2,629.9 L429.8,632.0 L429.3,634.0 L428.6,635.9 L428.0,637.7 L427.2,639.4 L426.4,640.9 L425.5,642.3 L424.5,643.5 L423.5,644.6 L422.4,645.4 L421.4,646.1 L420.3,646.6 L419.1,646.9 L393.1,652.9 L392.0,653.0 L390.9,652.9 L389.7,652.6 L388.6,652.1 L387.6,651.4 L386.5,650.6 L385.5,649.5 L384.5,648.3 L383.6,646.9 L382.8,645.4 L382.0,643.7 L381.4,641.9 L380.7,640.0 L380.2,638.0 L379.8,635.9 L379.4,633.7 L379.2,631.5 L379.1,629.3 Z" fill="url(#sg2)"/>
<path d="M303.2,628.3 L303.3,624.5 L303.6,620.8 L304.1,617.2 L304.9,613.7 L306.0,610.4 L307.3,607.4 L308.9,604.5 L310.6,601.9 L312.6,599.5 L314.8,597.5 L317.1,595.7 L319.6,594.2 L322.3,593.1 L325.0,592.2 L349.0,585.2 L351.9,584.8 L354.8,584.6 L357.8,584.8 L360.9,585.4 L363.9,586.2 L366.9,587.4 L369.9,588.9 L372.8,590.8 L375.6,592.9 L378.4,595.3 L381.0,597.9 L383.5,600.8 L385.8,603.9 L387.9,607.2 L389.8,610.7 L391.5,614.3 L393.0,618.0 L394.3,621.8 L395.3,625.7 L396.0,629.6 L396.5,633.5 L396.8,637.3 L396.7,641.1 L396.4,644.9 L395.9,648.4 L395.1,651.9 L394.0,655.2 L392.7,658.2 L391.1,661.1 L389.4,663.7 L387.4,666.1 L385.2,668.1 L382.9,669.9 L380.4,671.4 L377.7,672.5 L375.0,673.4 L351.0,680.4 L348.1,680.8 L345.2,681.0 L342.2,680.8 L339.1,680.2 L336.1,679.4 L333.1,678.2 L330.1,676.7 L327.2,674.9 L324.4,672.7 L321.6,670.3 L319.0,667.7 L316.5,664.8 L314.2,661.7 L312.1,658.4 L310.2,654.9 L308.5,651.3 L307.0,647.6 L305.7,643.8 L304.7,639.9 L304.0,636.0 L303.5,632.1 Z" fill="url(#sg3)"/>
<ellipse cx="338" cy="636.3" rx="33" ry="46" transform="rotate(-20 338 636.3)" fill="#c8c6ca" stroke="#22dd22" stroke-width="1.6"/>
<path d="M320,632 L326,626 L340,625.5 L347,631 L347,643 L340,650 L326,650 L319,644 Z" fill="#707074"/>
<path d="M320,632 L326,626 L333,626 L333,650 L326,650 L319,644 Z" fill="#5e5e62"/>
<path d="M328,639 L345,635.5" stroke="#111" stroke-width="3"/>
<path d="M335,589 L350,586.5 L457,593.5 L464,598.5 L487.5,635 L466,642 L441,601 L374,597.5 L360,596 Z" fill="#00d400"/>
<path d="M462.0,654.0 L462.1,653.0 L462.2,651.9 L462.4,650.9 L462.7,649.9 L463.1,648.9 L463.6,648.0 L464.2,647.1 L464.8,646.3 L465.5,645.5 L466.3,644.8 L467.1,644.2 L468.0,643.6 L468.9,643.1 L469.9,642.7 L499.9,631.7 L500.9,631.4 L501.9,631.2 L502.9,631.0 L504.0,631.0 L505.1,631.0 L506.1,631.2 L507.1,631.4 L508.1,631.7 L509.1,632.1 L510.0,632.6 L510.9,633.2 L511.7,633.8 L512.5,634.5 L513.2,635.3 L513.8,636.1 L514.4,637.0 L514.9,637.9 L515.3,638.9 L515.6,639.9 L515.8,640.9 L516.0,642.0 L516.0,643.0 L516.0,644.0 L515.8,645.1 L515.6,646.1 L515.3,647.1 L514.9,648.1 L514.4,649.0 L513.8,649.9 L513.2,650.7 L512.5,651.5 L511.7,652.2 L510.9,652.8 L510.0,653.4 L509.1,653.9 L508.1,654.3 L478.1,665.3 L477.1,665.6 L476.1,665.8 L475.1,666.0 L474.0,666.0 L472.9,666.0 L471.9,665.8 L470.9,665.6 L469.9,665.3 L468.9,664.9 L468.0,664.4 L467.1,663.8 L466.3,663.2 L465.5,662.5 L464.8,661.7 L464.2,660.9 L463.6,660.0 L463.1,659.1 L462.7,658.1 L462.4,657.1 L462.2,656.1 L462.1,655.0 Z" fill="url(#sg4)"/>
<ellipse cx="474.0" cy="654.0" rx="12" ry="12" transform="rotate(0 474.0 654.0)" fill="#707074"/>
<path d="M475.5,652.4 L497.5,647.2 L496.5,643.8 Z" fill="#e4e4ea"/>
<path d="M487,661 L512,643 L522,646 L494,665 Z" fill="#0a7a0a"/>
<path d="M497.0,631.0 L497.1,629.8 L497.2,628.6 L497.4,627.4 L497.8,626.2 L498.2,625.1 L498.7,624.0 L499.4,623.0 L500.0,622.0 L500.8,621.1 L501.6,620.3 L502.5,619.5 L503.5,618.9 L504.5,618.3 L505.6,617.8 L506.6,617.5 L544.6,606.5 L545.7,606.2 L546.9,606.0 L548.0,606.0 L549.1,606.0 L550.3,606.2 L551.4,606.5 L552.5,606.8 L553.5,607.3 L554.5,607.9 L555.5,608.5 L556.4,609.3 L557.2,610.1 L558.0,611.0 L558.6,612.0 L559.3,613.0 L559.8,614.1 L560.2,615.2 L560.6,616.4 L560.8,617.6 L561.0,618.8 L561.0,620.0 L561.0,621.2 L560.8,622.4 L560.6,623.6 L560.2,624.8 L559.8,625.9 L559.3,627.0 L558.6,628.0 L558.0,629.0 L557.2,629.9 L556.4,630.7 L555.5,631.5 L554.5,632.1 L553.5,632.7 L552.5,633.2 L551.4,633.5 L513.4,644.5 L512.3,644.8 L511.1,645.0 L510.0,645.0 L508.9,645.0 L507.7,644.8 L506.6,644.5 L505.6,644.2 L504.5,643.7 L503.5,643.1 L502.5,642.5 L501.6,641.7 L500.8,640.9 L500.0,640.0 L499.4,639.0 L498.7,638.0 L498.2,636.9 L497.8,635.8 L497.4,634.6 L497.2,633.4 L497.1,632.2 Z" fill="url(#sg5)"/>
<ellipse cx="510.0" cy="631.0" rx="13" ry="14" transform="rotate(0 510.0 631.0)" fill="#2c58dc"/>
<path d="M512.4,631.0 L533.4,628.2 L532.6,624.8 Z" fill="#e4e4ea"/>
<path d="M540.0,615.0 L540.0,613.1 L540.2,611.2 L540.4,609.3 L540.8,607.5 L541.2,605.7 L541.7,604.0 L542.4,602.4 L543.0,600.9 L543.8,599.4 L544.6,598.1 L545.5,597.0 L546.5,596.0 L547.5,595.1 L548.5,594.3 L549.6,593.8 L550.7,593.3 L551.9,593.1 L590.9,585.1 L592.0,585.0 L593.1,585.1 L594.3,585.3 L595.4,585.8 L596.5,586.3 L597.5,587.1 L598.5,588.0 L599.5,589.0 L600.4,590.1 L601.2,591.4 L602.0,592.9 L602.6,594.4 L603.3,596.0 L603.8,597.7 L604.2,599.5 L604.6,601.3 L604.8,603.2 L605.0,605.1 L605.0,607.0 L605.0,608.9 L604.8,610.8 L604.6,612.7 L604.2,614.5 L603.8,616.3 L603.3,618.0 L602.6,619.6 L602.0,621.1 L601.2,622.6 L600.4,623.9 L599.5,625.0 L598.5,626.0 L597.5,626.9 L596.5,627.7 L595.4,628.2 L594.3,628.7 L593.1,628.9 L554.1,636.9 L553.0,637.0 L551.9,636.9 L550.7,636.7 L549.6,636.2 L548.5,635.7 L547.5,634.9 L546.5,634.0 L545.5,633.0 L544.6,631.9 L543.8,630.6 L543.0,629.1 L542.4,627.6 L541.7,626.0 L541.2,624.3 L540.8,622.5 L540.4,620.7 L540.2,618.8 L540.0,616.9 Z" fill="url(#sg6)"/>
<ellipse cx="553.0" cy="615.0" rx="13" ry="22" transform="rotate(0 553.0 615.0)" fill="#006000"/>
<path d="M512,617 L537,611 L602,652.8 L593,664 L530,625.7 Z" fill="#28f028"/>
<path d="M591.0,665.0 L591.0,663.9 L591.2,662.7 L591.4,661.6 L591.8,660.5 L592.2,659.5 L592.7,658.5 L593.4,657.5 L594.0,656.6 L594.8,655.8 L595.6,655.0 L596.5,654.4 L597.5,653.7 L598.5,653.2 L626.5,640.2 L627.5,639.8 L628.6,639.4 L629.7,639.2 L630.9,639.0 L632.0,639.0 L633.1,639.0 L634.3,639.2 L635.4,639.4 L636.5,639.8 L637.5,640.2 L638.5,640.7 L639.5,641.4 L640.4,642.0 L641.2,642.8 L642.0,643.6 L642.6,644.5 L643.3,645.5 L643.8,646.5 L644.2,647.5 L644.6,648.6 L644.8,649.7 L645.0,650.9 L645.0,652.0 L645.0,653.1 L644.8,654.3 L644.6,655.4 L644.2,656.5 L643.8,657.5 L643.3,658.5 L642.6,659.5 L642.0,660.4 L641.2,661.2 L640.4,662.0 L639.5,662.6 L638.5,663.3 L637.5,663.8 L609.5,676.8 L608.5,677.2 L607.4,677.6 L606.3,677.8 L605.1,678.0 L604.0,678.0 L602.9,678.0 L601.7,677.8 L600.6,677.6 L599.5,677.2 L598.5,676.8 L597.5,676.3 L596.5,675.6 L595.6,675.0 L594.8,674.2 L594.0,673.4 L593.4,672.5 L592.7,671.5 L592.2,670.5 L591.8,669.5 L591.4,668.4 L591.2,667.3 L591.0,666.1 Z" fill="url(#sg7)"/>
<ellipse cx="604.0" cy="665.0" rx="13" ry="13" transform="rotate(0 604.0 665.0)" fill="#707074"/>
<path d="M607.0,666.0 L627.6,659.6 L626.4,656.4 Z" fill="#e4e4ea"/>
<path d="M617,669 L688,583 L696,590 L627,674 Z" fill="#0c9a0c"/>
<path d="M617,669 L688,583 L691,585.5 L620,671 Z" fill="#20d020"/>
<path d="M686.0,590.0 L686.0,588.8 L686.2,587.6 L686.4,586.4 L686.8,585.2 L687.2,584.1 L687.7,583.0 L688.4,582.0 L689.0,581.0 L689.8,580.1 L690.6,579.3 L691.5,578.5 L692.5,577.9 L693.5,577.3 L694.5,576.8 L695.6,576.5 L730.6,567.5 L731.7,567.2 L732.9,567.0 L734.0,567.0 L735.1,567.0 L736.3,567.2 L737.4,567.5 L738.5,567.8 L739.5,568.3 L740.5,568.9 L741.5,569.5 L742.4,570.3 L743.2,571.1 L744.0,572.0 L744.6,573.0 L745.3,574.0 L745.8,575.1 L746.2,576.2 L746.6,577.4 L746.8,578.6 L747.0,579.8 L747.0,581.0 L747.0,582.2 L746.8,583.4 L746.6,584.6 L746.2,585.8 L745.8,586.9 L745.3,588.0 L744.6,589.0 L744.0,590.0 L743.2,590.9 L742.4,591.7 L741.5,592.5 L740.5,593.1 L739.5,593.7 L738.5,594.2 L737.4,594.5 L702.4,603.5 L701.3,603.8 L700.1,604.0 L699.0,604.0 L697.9,604.0 L696.7,603.8 L695.6,603.5 L694.5,603.2 L693.5,602.7 L692.5,602.1 L691.5,601.5 L690.6,600.7 L689.8,599.9 L689.0,599.0 L688.4,598.0 L687.7,597.0 L687.2,595.9 L686.8,594.8 L686.4,593.6 L686.2,592.4 L686.0,591.2 Z" fill="url(#sg8)"/>
<ellipse cx="699.0" cy="590.0" rx="13" ry="14" transform="rotate(0 699.0 590.0)" fill="#707074"/>
<path d="M703.0,591.0 L726.5,585.7 L725.5,582.3 Z" fill="#e4e4ea"/>
<path d="M871.0,598.0 L871.1,596.5 L871.2,595.0 L871.6,593.6 L872.0,592.2 L872.5,590.8 L873.2,589.5 L874.0,588.2 L874.9,587.1 L875.8,586.0 L876.9,585.0 L878.0,584.1 L882.0,581.1 L883.2,580.3 L884.5,579.6 L885.9,579.0 L887.2,578.6 L888.6,578.3 L890.1,578.1 L891.5,578.0 L892.9,578.1 L894.4,578.3 L895.8,578.6 L897.1,579.0 L898.5,579.6 L899.8,580.3 L901.0,581.1 L902.1,582.0 L903.2,583.0 L904.1,584.1 L905.0,585.2 L905.8,586.5 L906.5,587.8 L907.0,589.2 L907.4,590.6 L907.8,592.0 L907.9,593.5 L908.0,595.0 L907.9,596.5 L907.8,598.0 L907.4,599.4 L907.0,600.8 L906.5,602.2 L905.8,603.5 L905.0,604.8 L904.1,605.9 L903.2,607.0 L902.1,608.0 L901.0,608.9 L897.0,611.9 L895.8,612.7 L894.5,613.4 L893.1,614.0 L891.8,614.4 L890.4,614.7 L888.9,614.9 L887.5,615.0 L886.1,614.9 L884.6,614.7 L883.2,614.4 L881.9,614.0 L880.5,613.4 L879.2,612.7 L878.0,611.9 L876.9,611.0 L875.8,610.0 L874.9,608.9 L874.0,607.8 L873.2,606.5 L872.5,605.2 L872.0,603.8 L871.6,602.4 L871.2,601.0 L871.1,599.5 Z" fill="url(#sg9)"/>
<ellipse cx="887.5" cy="598.0" rx="16.5" ry="17" transform="rotate(0 887.5 598.0)" fill="#707074"/>
<path d="M891.0,600.0 L906.4,597.4 L905.6,594.6 Z" fill="#e4e4ea"/>
<path d="M698,575 Q705,567 723,565.5 L780,562 L839,568 L896,573 Q908,575 908,590 L902,592 Q901,582 895,581 L839,575 L780,569 L725,572.5 Q712,573.5 702,580 Z" fill="#00cc00"/>
<path d="M808.0,556.0 L808.0,553.6 L808.2,551.1 L808.4,548.8 L808.7,546.4 L809.1,544.2 L809.6,542.0 L810.2,539.9 L810.8,538.0 L811.5,536.2 L812.3,534.5 L813.1,533.1 L814.0,531.8 L814.9,530.6 L815.9,529.7 L816.9,529.0 L817.9,528.4 L819.0,528.1 L833.0,524.1 L834.0,524.0 L835.0,524.1 L836.1,524.4 L837.1,525.0 L838.1,525.7 L839.1,526.6 L840.0,527.8 L840.9,529.1 L841.7,530.5 L842.5,532.2 L843.2,534.0 L843.8,535.9 L844.4,538.0 L844.9,540.2 L845.3,542.4 L845.6,544.8 L845.8,547.1 L846.0,549.6 L846.0,552.0 L846.0,554.4 L845.8,556.9 L845.6,559.2 L845.3,561.6 L844.9,563.8 L844.4,566.0 L843.8,568.1 L843.2,570.0 L842.5,571.8 L841.7,573.5 L840.9,574.9 L840.0,576.2 L839.1,577.4 L838.1,578.3 L837.1,579.0 L836.1,579.6 L835.0,579.9 L821.0,583.9 L820.0,584.0 L819.0,583.9 L817.9,583.6 L816.9,583.0 L815.9,582.3 L814.9,581.4 L814.0,580.2 L813.1,578.9 L812.3,577.5 L811.5,575.8 L810.8,574.0 L810.2,572.1 L809.6,570.0 L809.1,567.8 L808.7,565.6 L808.4,563.2 L808.2,560.9 L808.0,558.4 Z" fill="url(#sg10)"/>
<path d="M776.0,585.0 L776.0,583.5 L776.2,582.0 L776.4,580.6 L776.8,579.2 L777.2,577.8 L777.7,576.5 L778.4,575.2 L779.0,574.1 L779.8,573.0 L780.6,572.0 L781.5,571.1 L782.5,570.3 L783.5,569.6 L784.5,569.0 L785.6,568.6 L786.7,568.3 L810.7,562.3 L811.9,562.1 L813.0,562.0 L814.1,562.1 L815.3,562.3 L816.4,562.6 L817.5,563.0 L818.5,563.6 L819.5,564.3 L820.5,565.1 L821.4,566.0 L822.2,567.0 L823.0,568.1 L823.6,569.2 L824.3,570.5 L824.8,571.8 L825.2,573.2 L825.6,574.6 L825.8,576.0 L826.0,577.5 L826.0,579.0 L826.0,580.5 L825.8,582.0 L825.6,583.4 L825.2,584.8 L824.8,586.2 L824.3,587.5 L823.6,588.8 L823.0,589.9 L822.2,591.0 L821.4,592.0 L820.5,592.9 L819.5,593.7 L818.5,594.4 L817.5,595.0 L816.4,595.4 L815.3,595.7 L791.3,601.7 L790.1,601.9 L789.0,602.0 L787.9,601.9 L786.7,601.7 L785.6,601.4 L784.5,601.0 L783.5,600.4 L782.5,599.7 L781.5,598.9 L780.6,598.0 L779.8,597.0 L779.0,595.9 L778.4,594.8 L777.7,593.5 L777.2,592.2 L776.8,590.8 L776.4,589.4 L776.2,588.0 L776.0,586.5 Z" fill="url(#sg11)"/>
<ellipse cx="789.0" cy="585.0" rx="13" ry="17" transform="rotate(0 789.0 585.0)" fill="#2c58dc"/>
<path d="M792.0,588.0 L815.5,582.7 L814.5,579.3 Z" fill="#e4e4ea"/>
<path d="M760,564 L839,568 L839,575 L760,571 Z" fill="#00cc00"/>
<path d="M776.0,549.0 L776.0,547.4 L776.2,545.9 L776.4,544.3 L776.8,542.8 L777.2,541.4 L777.7,540.0 L778.4,538.7 L779.0,537.4 L779.8,536.3 L780.6,535.2 L781.5,534.3 L782.5,533.4 L783.5,532.7 L784.5,532.1 L785.6,531.6 L786.7,531.3 L810.7,524.3 L811.9,524.1 L813.0,524.0 L814.1,524.1 L815.3,524.3 L816.4,524.6 L817.5,525.1 L818.5,525.7 L819.5,526.4 L820.5,527.3 L821.4,528.2 L822.2,529.3 L823.0,530.4 L823.6,531.7 L824.3,533.0 L824.8,534.4 L825.2,535.8 L825.6,537.3 L825.8,538.9 L826.0,540.4 L826.0,542.0 L826.0,543.6 L825.8,545.1 L825.6,546.7 L825.2,548.2 L824.8,549.6 L824.3,551.0 L823.6,552.3 L823.0,553.6 L822.2,554.7 L821.4,555.8 L820.5,556.7 L819.5,557.6 L818.5,558.3 L817.5,558.9 L816.4,559.4 L815.3,559.7 L791.3,566.7 L790.1,566.9 L789.0,567.0 L787.9,566.9 L786.7,566.7 L785.6,566.4 L784.5,565.9 L783.5,565.3 L782.5,564.6 L781.5,563.7 L780.6,562.8 L779.8,561.7 L779.0,560.6 L778.4,559.3 L777.7,558.0 L777.2,556.6 L776.8,555.2 L776.4,553.7 L776.2,552.1 L776.0,550.6 Z" fill="url(#sg12)"/>
<ellipse cx="789.0" cy="549.0" rx="13" ry="18" transform="rotate(0 789.0 549.0)" fill="#2c58dc"/>
<path d="M792.0,551.0 L817.5,545.7 L816.5,542.3 Z" fill="#e4e4ea"/>
<path d="M805,566 L839,568 L896,573 L896,580 L839,575 L805,573 Z" fill="#00cc00"/>
<path d="M899,583 Q908,585 908,596 L901.5,692 L896,692 L902,596 Q902,590 897,588 Z" fill="#00cc00"/>
<path d="M895,688 L896,676 Q898,663 912,663 Q926,663 927,676 L927,700 Q927,711 911,711 Q895,711 895,700 Z" fill="#707074"/>
<path d="M897,676 Q900,664 912,664 Q925,664 926,676 L926,688 Q912,692 897,688 Z" fill="#6c6c70"/>
<path d="M897,676 Q899,666 905,664 L904,690 L897,688 Z" fill="#5a5a5e"/>
<path d="M914.0,697.0 L927.2,696.5 L926.8,693.5 Z" fill="#e4e4ea"/>
<path d="M896.5,664 L901.5,664 L900,692 L895,700 L895,690 Z" fill="#00cc00"/>
<path d="M1054,721 L1066,712 L1098,730 L1100,750 L1080,758 Z" fill="#38383c"/>
<path d="M925,695 L1060,708 L1084,711 L1099.5,736 L1090,742 L1070,718 L1050,721.5 L925.5,708.5 Z" fill="#00cc00"/>
<ellipse cx="1083" cy="742" rx="17" ry="16.5" fill="#707074"/>
<path d="M1088.0,743.0 L1101.2,742.5 L1100.8,739.5 Z" fill="#e4e4ea"/>
<path d="M1078,757 L1094.5,757 L1067,855 L1059,826 Z" fill="#0a8a0a"/>
<path d="M1091,757 L1094.5,757 L1067,855 L1064.5,849 Z" fill="#00c000"/>
<path d="M1058,822 Q1062,815 1078,815 Q1092,816 1100,832 L1105,862 Q1105,875 1088,875 Q1071,875 1071,862 Z" fill="#6a6a6e"/>
<ellipse cx="1088" cy="862" rx="17" ry="13" fill="#707074"/>
<path d="M1092.0,863.0 L1106.2,863.0 L1105.8,860.0 Z" fill="#e4e4ea"/>
<path d="M1059,826 L1067,855 L1072,852 L1064,824 Z" fill="#0a9a0a"/>
<path d="M1134.4,807.5 C1134,790 1150,784 1168,785.5 C1177,786 1182,787.5 1187,791 L1262,878 L1226,906 L1218,905 L1157.4,849.3 C1145,832 1134.6,820 1134.4,807.5 Z" fill="#000086"/>
<path d="M1134.4,807.5 C1134,790 1150,784 1168,785.5 C1177,786 1182,787.5 1187,791 L1206,813 C1195,818 1175,830 1155,837 C1142,826 1134.6,818 1134.4,807.5 Z" fill="#00005c"/>
<path d="M1198.1,880.0 L1198.2,878.8 L1198.4,877.7 L1198.8,876.5 L1199.4,875.4 L1200.1,874.4 L1200.9,873.3 L1201.9,872.3 L1203.0,871.3 L1204.2,870.4 L1205.5,869.6 L1206.9,868.9 L1208.4,868.2 L1209.9,867.6 L1211.5,867.0 L1213.2,866.6 L1214.9,866.3 L1216.6,866.1 L1218.4,865.9 L1220.1,865.9 L1221.8,866.0 L1223.5,866.1 L1225.2,866.4 L1226.8,866.8 L1228.3,867.2 L1229.7,867.8 L1231.1,868.4 L1232.4,869.1 L1233.5,869.9 L1234.5,870.7 L1235.5,871.6 L1236.2,872.6 L1252.2,892.6 L1252.9,893.6 L1253.3,894.7 L1253.7,895.8 L1253.9,896.9 L1253.9,898.0 L1253.8,899.2 L1253.6,900.3 L1253.2,901.5 L1252.6,902.6 L1251.9,903.6 L1251.1,904.7 L1250.1,905.7 L1249.0,906.7 L1247.8,907.6 L1246.5,908.4 L1245.1,909.1 L1243.6,909.8 L1242.1,910.4 L1240.5,911.0 L1238.8,911.4 L1237.1,911.7 L1235.4,911.9 L1233.6,912.1 L1231.9,912.1 L1230.2,912.0 L1228.5,911.9 L1226.8,911.6 L1225.2,911.2 L1223.7,910.8 L1222.3,910.2 L1220.9,909.6 L1219.6,908.9 L1218.5,908.1 L1217.5,907.3 L1216.5,906.4 L1215.8,905.4 L1199.8,885.4 L1199.1,884.4 L1198.7,883.3 L1198.3,882.2 L1198.1,881.1 Z" fill="url(#sg13)"/>
<ellipse cx="1234.0" cy="899.0" rx="20" ry="13" transform="rotate(-6 1234.0 899.0)" fill="#2c5ad0"/>
<path d="M1240.0,900.0 L1254.2,900.0 L1253.8,897.0 Z" fill="#e4e4ea"/>
<path d="M1252,862 L1290,866 L1312.5,889 L1252,883 Z" fill="#10bc10"/>
<path d="M1195.1,836.0 L1195.2,834.9 L1195.5,833.8 L1195.9,832.7 L1196.4,831.6 L1197.1,830.6 L1198.0,829.6 L1198.9,828.6 L1200.0,827.7 L1201.2,826.8 L1202.5,826.0 L1203.9,825.3 L1205.4,824.6 L1207.0,824.0 L1208.6,823.5 L1210.3,823.1 L1212.0,822.8 L1213.7,822.6 L1215.4,822.4 L1217.2,822.4 L1218.9,822.5 L1220.6,822.6 L1222.2,822.9 L1223.8,823.2 L1225.3,823.6 L1226.8,824.1 L1228.1,824.7 L1229.4,825.4 L1230.5,826.2 L1231.6,827.0 L1232.5,827.9 L1233.2,828.8 L1263.2,866.8 L1263.9,867.8 L1264.4,868.8 L1264.7,869.8 L1264.9,870.9 L1264.9,872.0 L1264.8,873.1 L1264.5,874.2 L1264.1,875.3 L1263.6,876.4 L1262.9,877.4 L1262.0,878.4 L1261.1,879.4 L1260.0,880.3 L1258.8,881.2 L1257.5,882.0 L1256.1,882.7 L1254.6,883.4 L1253.0,884.0 L1251.4,884.5 L1249.7,884.9 L1248.0,885.2 L1246.3,885.4 L1244.6,885.6 L1242.8,885.6 L1241.1,885.5 L1239.4,885.4 L1237.8,885.1 L1236.2,884.8 L1234.7,884.4 L1233.2,883.9 L1231.9,883.3 L1230.6,882.6 L1229.5,881.8 L1228.4,881.0 L1227.5,880.1 L1226.8,879.2 L1196.8,841.2 L1196.1,840.2 L1195.6,839.2 L1195.3,838.2 L1195.1,837.1 Z" fill="url(#sg14)"/>
<ellipse cx="1245.0" cy="873.0" rx="20" ry="12.5" transform="rotate(-6 1245.0 873.0)" fill="#2e5cd8"/>
<path d="M1251.0,874.0 L1266.1,874.0 L1265.9,871.0 Z" fill="#e4e4ea"/>
<path d="M1103,848.5 L1206,853.8 L1223,876 L1103,869 Z" fill="#10bc10"/>
<path d="M1431,846 V800" stroke="#108010" stroke-width="2"/>
<path d="M1425,805 L1431,792 L1437,805 Z" fill="#108010"/>
<path d="M1431,846 L1476,852" stroke="#ee1010" stroke-width="3"/>
<path d="M1473,846 L1487,853 L1473,858 Z" fill="#ee1010"/>
<path d="M1431,846 L1418,862" stroke="#1010ee" stroke-width="3"/>
<ellipse cx="1416" cy="865" rx="6" ry="6" fill="#1010ee"/>
<path d="M1427,777 L1431,782 L1435,777 M1431,782 V787" fill="none" stroke="#777" stroke-width="1.2"/>
<path d="M1491,849 L1500,859 M1500,849 L1491,859" stroke="#777" stroke-width="1.2"/>
<path d="M1400,871 H1411 L1400,884 H1412" fill="none" stroke="#777" stroke-width="1.2"/>
<!--/SCENE-->

<!-- bottom toolbar -->
<rect x="10" y="927" width="1501" height="45" fill="#f0f0f0"/>
<rect x="10" y="927" width="1501" height="1" fill="#b4b4b4"/>
<rect x="0" y="972" width="1521" height="1" fill="#8fd3dc"/>
<rect x="0" y="973" width="1521" height="3" fill="#2a4a5a"/>
<rect x="0" y="466" width="1" height="507" fill="#dfe6ee"/>
<rect x="1520" y="466" width="1" height="507" fill="#dfe6ee"/>
<rect x="1" y="466" width="1.3" height="507" fill="#1e2a36"/>
<rect x="1518.8" y="466" width="1.3" height="507" fill="#1e2a36"/>
<rect x="2.3" y="494" width="7.7" height="479" fill="#c2d8ee"/>
<rect x="1511" y="494" width="7.8" height="479" fill="#b4dcef"/>

<!--BOTTOM_ICONS-->
<!-- mixer -->
<g>
  <rect x="28.5" y="933" width="22" height="8.5" fill="#e8e8e8" stroke="#9a9a9a" stroke-width="1"/>
  <path d="M28.5,937.2 H50.5 M35.8,933 V941.5 M43.2,933 V941.5" stroke="#9a9a9a" stroke-width="1"/>
  <path d="M31,944 V960 M40,944 V960 M48.5,944 V960" stroke="#111" stroke-width="2.6"/>
  <rect x="28.5" y="951" width="5" height="4" fill="#3a6fa8"/>
  <rect x="37.5" y="953.5" width="5" height="4" fill="#3a6fa8"/>
  <rect x="46" y="947.5" width="5" height="4" fill="#3a6fa8"/>
</g>
<!-- cube -->
<g stroke="#dde4ee" stroke-width="1.2" stroke-linejoin="round">
  <path d="M89.5,934.5 L102,940.5 L89.5,946.5 L77,940.5 Z" fill="#2f63a0"/>
  <path d="M77,940.5 L89.5,946.5 L89.5,959.5 L77,953 Z" fill="#2a5a96"/>
  <path d="M102,940.5 L89.5,946.5 L89.5,959.5 L102,953 Z" fill="#3368a6"/>
</g>
<path d="M77,940.5 L89.5,934.5 L102,940.5 L102,953 L89.5,959.5 L77,953 Z" fill="none" stroke="#203850" stroke-width="1"/>
<path d="M111,946.5 H120.5 L115.8,952 Z" fill="#333"/>
<!-- arrow cursor -->
<path d="M132.5,935 L151.5,945 L143,946.5 L148.5,957 L145,959.5 L139.5,949 L133,955 Z" fill="#fff" stroke="#6a7a8a" stroke-width="1.5" stroke-linejoin="round"/>
<path d="M163,946.5 H172.5 L167.8,952 Z" fill="#333"/>
<!-- expand arrows -->
<g fill="#2b5f92" stroke="#2b5f92" stroke-width="2.4" stroke-linecap="round">
  <path d="M186,939 L192.5,945.5 M204,939 L197,945.5 M186,956 L192.5,949.5 M204,956 L197,949.5"/>
</g>
<g fill="#2b5f92">
  <path d="M182,934.5 L191,936 L183.5,943.5 Z"/>
  <path d="M207.5,934.5 L206,943.5 L198.5,936 Z"/>
  <path d="M182,960 L183.5,951 L191,958.5 Z"/>
  <path d="M207.5,960 L198.5,958.5 L206,951 Z"/>
</g>
<!-- grid 3d -->
<g stroke="#2e4a7a" stroke-width="1.6" fill="none">
  <rect x="216.5" y="932.5" width="29" height="29" fill="#eef4fb"/>
  <path d="M222.3,932.5 V961.5 M228.1,932.5 V961.5 M233.9,932.5 V961.5 M239.7,932.5 V961.5"/>
  <path d="M216.5,938.3 H245.5 M216.5,944.1 H245.5 M216.5,949.9 H245.5 M216.5,955.7 H245.5"/>
</g>
<!-- axes toggle -->
<rect x="251" y="930.3" width="33" height="33" fill="#dae6f7" stroke="#2424e0" stroke-width="2"/>
<path d="M267,950.5 V938" stroke="#1f8a4a" stroke-width="2.4"/>
<path d="M263.5,940 L267,934 L270.5,940 Z" fill="#1f8a4a"/>
<path d="M267,950.5 L256,958" stroke="#1a1acc" stroke-width="2.4"/>
<path d="M254,960 L255.5,954 L259.5,958.5 Z" fill="#1a1acc"/>
<path d="M267,950.5 L278,957" stroke="#e02020" stroke-width="2.4"/>
<path d="M282,959.5 L275.5,959.5 L278.5,954 Z" fill="#e02020"/>
<!-- shapes toggle -->
<rect x="287" y="930.3" width="33" height="33" fill="#dae6f7" stroke="#2424e0" stroke-width="2"/>
<path d="M297.5,934 L304,945 L291,945 Z" fill="none" stroke="#4a6080" stroke-width="1.4"/>
<rect x="291.5" y="948.5" width="12" height="12" fill="none" stroke="#4a6080" stroke-width="1.4"/>
<circle cx="311.5" cy="950" r="6" fill="none" stroke="#4a6080" stroke-width="1.4"/>
<!-- polyline -->
<path d="M352,935 L327.5,938.5 L338.2,959" fill="none" stroke="#3a5a80" stroke-width="2"/>
<circle cx="352" cy="935" r="2.6" fill="#2f5f92"/>
<circle cx="327.5" cy="938.5" r="2.8" fill="#2f5f92"/>
<circle cx="338.2" cy="959" r="2.6" fill="#2f5f92"/>
<!-- rotate toggle -->
<rect x="376" y="930.3" width="33" height="33" fill="#dae6f7" stroke="#2424e0" stroke-width="2"/>
<path d="M392.5,934.5 V960" stroke="#3a4a60" stroke-width="1.6"/>
<path d="M388.5,940 L392.5,934.5 L396.5,940" fill="none" stroke="#3a4a60" stroke-width="1.6"/>
<path d="M387,946 C380,948 383,953 392,953 C401,953 404,948 396,945.5" fill="none" stroke="#3a4a60" stroke-width="1.5"/>
<path d="M384.5,946 L389,943.5 L389,948.5 Z" fill="#3a4a60"/>
<!-- curve toggle -->
<rect x="412" y="930.3" width="33" height="33" fill="#dae6f7" stroke="#2424e0" stroke-width="2"/>
<path d="M416.5,959 C417,945 422,938 428,937 C434,936.5 439,941 441,959" fill="none" stroke="#3a4a60" stroke-width="2"/>
<g fill="#f4f8ff" stroke="#3a4a60" stroke-width="1.4"><circle cx="417.5" cy="952.5" r="1.8"/><circle cx="420" cy="943" r="1.8"/><circle cx="433.5" cy="939" r="1.8"/><circle cx="440" cy="951.5" r="1.8"/></g>
<!-- hand -->
<path d="M458.5,936 C458.5,933 462,933 462,936 L462,946 L462,943.5 C462,941.5 465,941.5 465,943.5 L465,945 C465,943 468,943 468,945 L468,946 C468,944 471,944 471,946 L471,958 C471,960 470,961 468,961 L461,961 C459,961 458,960 457,958 L453.5,951 C452.5,949 455,947.5 456.5,949 L458.5,951 Z" fill="#fff" stroke="#6a7a8a" stroke-width="1.4" stroke-linejoin="round"/>
<path d="M466,951.5 V957.5 M463,954.5 H469" stroke="#6a7a8a" stroke-width="1.3"/>
<!-- camera (disabled) -->
<path d="M490,932.5 H486.8 V961 H490 M512,932.5 H515 V961 H512" fill="none" stroke="#8a8a8a" stroke-width="1.4"/>
<g fill="#9a9a9a">
  <circle cx="495.8" cy="941.2" r="2.6"/><circle cx="503" cy="941.2" r="2.6"/>
  <rect x="491" y="943.5" width="16" height="6.5"/><path d="M507,946.8 L511,944 L511,949.5 Z"/>
  <path d="M496,957 L500,950 L504,957" fill="none" stroke="#9a9a9a" stroke-width="1.6"/>
</g>
<!-- media buttons -->
<g fill="#2d62a0">
  <rect x="522.5" y="932" width="29.5" height="29.5"/>
  <rect x="558.8" y="932" width="29.5" height="29.5"/>
  <rect x="595" y="932" width="29.5" height="29.5"/>
  <rect x="631" y="932" width="29.5" height="29.5"/>
  <rect x="667.3" y="932" width="29.5" height="29.5"/>
  <rect x="752.2" y="932" width="29.5" height="29.5"/>
</g>
<g fill="#fff">
  <rect x="527.5" y="939" width="4.5" height="16"/>
  <path d="M533,947 L546,939.5 L546,954.5 Z"/>
  <path d="M564.8,936.8 L584,947 L564.8,957.2 Z"/>
  <path d="M638,939.5 L651,947 L638,954.5 Z"/>
  <rect x="652" y="939" width="4.5" height="16"/>
  <path d="M672,947 L680.5,941 L680.5,953 Z"/>
  <path d="M681.5,947 L690,941 L690,953 Z"/>
  <path d="M758,941 L766.5,947 L758,953 Z"/>
  <path d="M767.5,941 L776,947 L767.5,953 Z"/>
</g>
<path d="M619,939.5 L600,947 L619,954.5 Z" fill="none" stroke="#e0ecf8" stroke-width="1.8"/>
<path d="M620,940 L606,947 L620,954 Z" fill="#fff"/>
<!-- 1X box -->
<rect x="701.5" y="935.5" width="46" height="23.5" fill="#f0f0f0" stroke="#b4b4b4" stroke-width="1"/>
<text x="724" y="953" font-size="15" text-anchor="middle" fill="#111" style="font-family:'Liberation Serif'">1X</text>
<!-- 0 box -->
<rect x="786.5" y="935.5" width="46.5" height="23.5" fill="#f0f0f0" stroke="#b4b4b4" stroke-width="1"/>
<text x="789.5" y="953" font-size="14" fill="#111" style="font-family:'Liberation Sans'">0</text>
<!-- slider -->
<rect x="844" y="945.5" width="111" height="2" fill="#dcdcdc"/>
<rect x="837.5" y="934.5" width="6" height="25" fill="#0a7ad8"/>

<!--/BOTTOM_ICONS-->

</svg>
</body></html>
